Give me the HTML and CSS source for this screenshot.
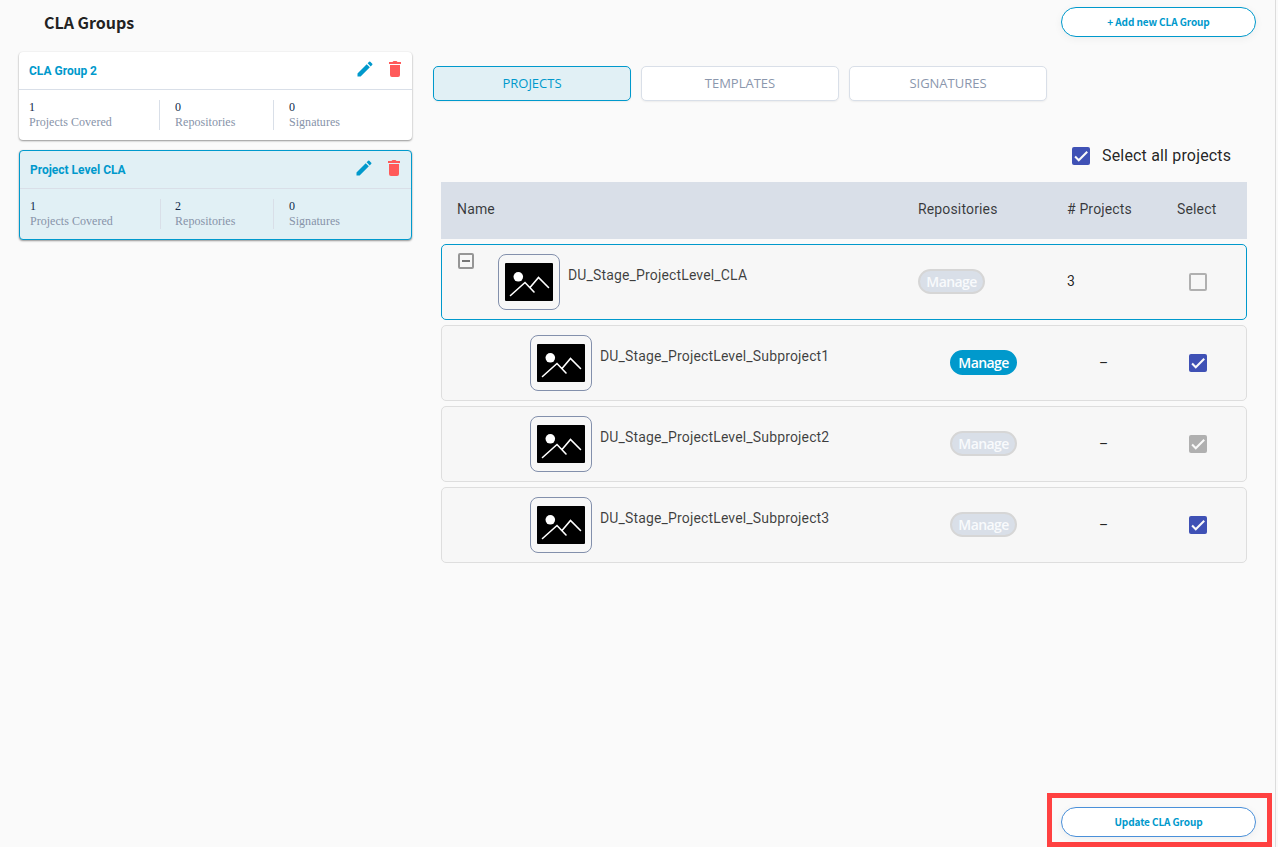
FILE: index.html
```html
<!DOCTYPE html>
<html lang="en">
<head>
<meta charset="utf-8">
<title>CLA Groups</title>
<link rel="stylesheet" href="styles.css">
</head>
<body>
<svg class="defs" width="0" height="0">
  <symbol id="pencil" viewBox="0 0 24 24"><path d="M3 17.250V21h3.750L17.810 9.940l-3.750-3.750L3 17.250zM20.710 7.040a1 1 0 0 0 0-1.410l-2.340-2.340a1 1 0 0 0-1.410 0l-1.830 1.830 3.750 3.750 1.830-1.830z"/></symbol>
  <symbol id="trash" viewBox="0 0 12 16"><path d="M1 4h10v10a2 2 0 0 1-2 2H3a2 2 0 0 1-2-2zM0 1h3.500l1-1H7.500l1 1H12v2H0z"/></symbol>
  <symbol id="check" viewBox="0 0 24 24"><path d="M4.100 12.700L9 17.600 20.300 6.300" fill="none" stroke="currentColor" stroke-width="2.700"/></symbol>
  <symbol id="photo" viewBox="0 0 48 38"><rect width="48" height="38" rx="1"/><circle cx="13.300" cy="13.800" r="4.800" fill="#fff"/><path d="M5.500 32.500L20 19.500l9 9.500M25 24.500l8.500-10 10 10" fill="none" stroke="#fff" stroke-width="1.600" stroke-linecap="round"/></symbol>
</svg>
<div class="page">
  <aside class="sidebar">
    <h1 class="title">CLA Groups</h1>
    <section class="card">
      <header class="card-head">
        <h2 class="card-title">CLA Group 2</h2>
        <svg class="edit"><use href="#pencil"/></svg>
        <svg class="delete"><use href="#trash"/></svg>
      </header>
      <div class="stats">
        <div class="stat"><b>1</b><span>Projects Covered</span></div>
        <div class="stat"><b>0</b><span>Repositories</span></div>
        <div class="stat"><b>0</b><span>Signatures</span></div>
      </div>
    </section>
    <section class="card selected">
      <header class="card-head">
        <h2 class="card-title">Project Level CLA</h2>
        <svg class="edit"><use href="#pencil"/></svg>
        <svg class="delete"><use href="#trash"/></svg>
      </header>
      <div class="stats">
        <div class="stat"><b>1</b><span>Projects Covered</span></div>
        <div class="stat"><b>2</b><span>Repositories</span></div>
        <div class="stat"><b>0</b><span>Signatures</span></div>
      </div>
    </section>
  </aside>
  <main class="main">
    <div class="top"><button class="pill">+ Add new CLA Group</button></div>
    <nav class="tabs">
      <button class="tab active">PROJECTS</button>
      <button class="tab">TEMPLATES</button>
      <button class="tab">SIGNATURES</button>
    </nav>
    <div class="select-all"><span class="box on"><svg><use href="#check"/></svg></span><span class="select-label">Select all projects</span></div>
    <div class="table">
      <div class="thead"><span>Name</span><span>Repositories</span><span># Projects</span><span>Select</span></div>
      <div class="row parent">
        <div class="name"><span class="toggle"></span><span class="thumb"><svg><use href="#photo"/></svg></span><span class="label">DU_Stage_ProjectLevel_CLA</span></div>
        <div class="repo"><button class="manage">Manage</button></div><div class="count">3</div><div class="sel"><span class="box"></span></div>
      </div>
      <div class="row child">
        <div class="name"><span class="thumb"><svg><use href="#photo"/></svg></span><span class="label">DU_Stage_ProjectLevel_Subproject1</span></div>
        <div class="repo"><button class="manage enabled">Manage</button></div><div class="count">–</div><div class="sel"><span class="box on"><svg><use href="#check"/></svg></span></div>
      </div>
      <div class="row child">
        <div class="name"><span class="thumb"><svg><use href="#photo"/></svg></span><span class="label">DU_Stage_ProjectLevel_Subproject2</span></div>
        <div class="repo"><button class="manage">Manage</button></div><div class="count">–</div><div class="sel"><span class="box on off"><svg><use href="#check"/></svg></span></div>
      </div>
      <div class="row child">
        <div class="name"><span class="thumb"><svg><use href="#photo"/></svg></span><span class="label">DU_Stage_ProjectLevel_Subproject3</span></div>
        <div class="repo"><button class="manage">Manage</button></div><div class="count">–</div><div class="sel"><span class="box on"><svg><use href="#check"/></svg></span></div>
      </div>
    </div>
    <div class="highlight"><button class="pill update">Update CLA Group</button></div>
  </main>
</div>
</body>
</html>
```

FILE: styles.css
```css
* { box-sizing: border-box; }
body { margin: 0; background: #fafafa; font-family: Roboto, sans-serif; color: rgba(0, 0, 0, .87); overflow: hidden; }
button { padding: 0; margin: 0; }
svg { display: block; }
.defs { position: absolute; }
.page { display: flex; width: 1276px; height: 847px; border-right: 1px solid #dcdcdc; }

.sidebar { width: 433px; padding: 0 21px 0 19px; }
.title { margin: 0; height: 52px; padding: 8px 0 0 25px; font: 700 16px/28px "Noto Sans CJK SC", sans-serif; color: #222; white-space: nowrap; }
.card { width: 393px; height: 88px; margin-bottom: 10px; background: #fff; border-radius: 4px; box-shadow: 0 1px 2px rgba(0, 0, 0, .4), 0 0 2px rgba(0, 0, 0, .06); }
.card.selected { height: 90px; background: #e1f0f5; border: 1px solid #009acd; }
.card-head { display: flex; align-items: flex-start; height: 38px; padding: 0 11px 0 10px; border-bottom: 1px solid #d9dfe8; }
.card-title { flex: 1; margin: 0; font: 700 12px/38px Roboto, sans-serif; color: #0099cc; }
.edit { width: 20px; height: 20px; margin: 7px 14px 0 0; fill: #0099cc; }
.delete { width: 12px; height: 16px; margin-top: 9px; fill: #ff5a5a; }
.stats { display: flex; padding: 10px 10px 0; }
.stat { height: 30px; font: 12px/14px "Liberation Serif", serif; letter-spacing: .03px; color: #8793a9; }
.stat b { display: block; height: 14px; font-weight: 400; color: #10294a; }
.stat span { display: block; line-height: 16px; }
.stat:nth-child(1) { width: 131px; border-right: 1px solid #d9dfe8; }
.stat:nth-child(2) { width: 114px; padding-left: 15px; border-right: 1px solid #d9dfe8; }
.stat:nth-child(3) { padding-left: 15px; }
.selected .stat:nth-child(2) { width: 113px; padding-left: 14px; }

.main { display: flex; flex-direction: column; width: 842px; }
.top { display: flex; justify-content: flex-end; height: 66px; padding: 7px 19px 0 0; }
.pill { width: 195px; height: 30px; border: 1px solid #0099cc; border-radius: 15px; background: #fff; color: #0099cc; font: 700 10px/28px "Noto Sans CJK SC", sans-serif; letter-spacing: -.1px; box-shadow: 0 2px 8px rgba(0, 0, 0, .05); }
.tabs { display: flex; gap: 10px; }
.tab { width: 198px; height: 35px; border: 1px solid #d9dfe8; border-radius: 5px; background: #fff; color: #8b97ad; font: 13px/33px "Open Sans", sans-serif; box-shadow: 0 1px 2px rgba(0, 0, 0, .06); }
.tab.active { background: #e1f0f5; border-color: #0099cc; color: #0099cc; }
.select-all { display: flex; align-items: center; gap: 12px; height: 20px; margin: 45px 0 0 639px; font-size: 16px; letter-spacing: .17px; white-space: nowrap; }
.select-label { padding-bottom: 2px; }
.box { display: block; width: 18px; height: 18px; border: 2px solid #b0b0b0; border-radius: 2px; }
.box svg { width: 18px; height: 18px; }
.box.on { border: 0; background: #3f51b5; color: #fafafa; }
.box.off { background: #b0b0b0; }

.table { display: flex; flex-direction: column; gap: 5px; width: 806px; margin: 16px 0 0 8px; font-size: 14px; letter-spacing: .15px; }
.thead, .row { display: grid; grid-template-columns: 477px 149px 110px 70px; }
.thead { height: 57px; line-height: 54px; background: #d9dfe8; color: rgba(0, 0, 0, .75); }
.thead span:first-child { padding-left: 16px; }
.row { grid-template-columns: 476px 149px 122px 57px; align-items: center; height: 76px; border: 1px solid #dedede; border-radius: 5px; background: #f7f7f7; }
.row.parent { border-color: #0099cc; }
.name { display: flex; align-items: flex-start; height: 74px; color: rgba(0, 0, 0, .75); }
.toggle { display: flex; align-items: center; justify-content: center; width: 16px; height: 16px; margin: 8px 24px 0 16px; border: 2px solid #969696; border-radius: 2px; }
.toggle::before { content: ""; width: 8px; height: 2px; background: #777; }
.thumb { width: 62px; height: 56px; margin-top: 9px; padding: 8px 6px; border: 1px solid #8390ac; border-radius: 8px; }
.thumb svg { width: 48px; height: 38px; }
.child .thumb { margin-left: 88px; }
.label { margin: 20px 0 0 8px; line-height: 20px; }
.repo { padding-bottom: 1px; }
.child .repo { padding-left: 32px; }
.manage { display: block; width: 67px; height: 25px; border: 2px solid #d6d6d6; border-radius: 13px; background: #d9dfe8; color: #f8fafc; font: 600 14px/21px "Open Sans", sans-serif; letter-spacing: -.6px; }
.manage.enabled { border-color: #0099cc; background: #0099cc; color: #fff; }
.count { padding-bottom: 1px; }
.parent .count { padding-bottom: 2px; }
.child .count { padding-left: 32px; }

.highlight { align-self: flex-end; width: 225px; height: 54px; margin: auto 3px 0 0; padding: 9px; border: 5px solid #ff4141; }
.update { border-color: #4a90d9; }
```
